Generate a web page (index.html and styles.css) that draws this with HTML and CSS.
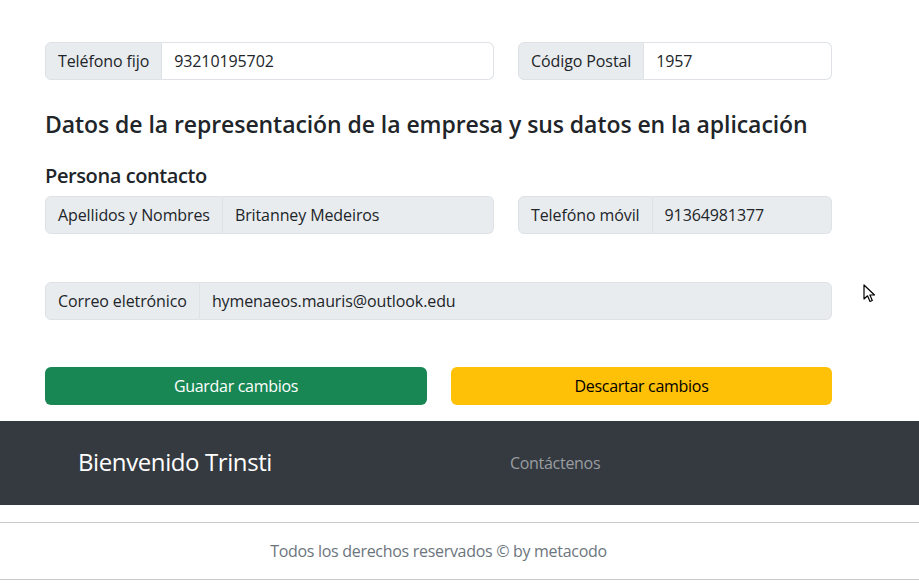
FILE: index.html
```html
<!DOCTYPE html>
<html lang="es">
<head>
<meta charset="utf-8">
<title>Datos de la empresa</title>
<link rel="stylesheet" href="styles.css">
</head>
<body>
<main class="content">
  <div class="row row-first">
    <div class="group col-wide">
      <span class="label">Teléfono fijo</span>
      <span class="field">93210195702</span>
    </div>
    <div class="group col-narrow">
      <span class="label">Código Postal</span>
      <span class="field">1957</span>
    </div>
  </div>

  <h4 class="title">Datos de la representación de la empresa y sus datos en la aplicación</h4>
  <h5 class="subtitle">Persona contacto</h5>

  <div class="row">
    <div class="group col-wide">
      <span class="label">Apellidos y Nombres</span>
      <span class="field disabled">Britanney Medeiros</span>
    </div>
    <div class="group col-narrow">
      <span class="label">Telefóno móvil</span>
      <span class="field disabled">91364981377</span>
    </div>
  </div>

  <div class="row row-mail">
    <div class="group col-full">
      <span class="label">Correo eletrónico</span>
      <span class="field disabled">hymenaeos.mauris@outlook.edu</span>
    </div>
  </div>

  <div class="buttons">
    <button class="btn btn-save">Guardar cambios</button>
    <button class="btn btn-discard">Descartar cambios</button>
  </div>
</main>

<nav class="navbar">
  <span class="brand">Bienvenido Trinsti</span>
  <a class="nav-link">Contáctenos</a>
</nav>

<footer class="footer">
  <p>Todos los derechos reservados © by metacodo</p>
</footer>

<svg class="cursor" width="14" height="20" viewBox="0 0 14 20">
  <path d="M1 1 L1 15 L4.5 11.8 L7 17.5 L9.3 16.5 L6.9 11 L11.5 11 Z" fill="#fff" stroke="#000" stroke-width="1.2" stroke-linejoin="round"/>
</svg>
</body>
</html>
```

FILE: styles.css
```css
* { box-sizing: border-box; }

html, body {
  margin: 0;
  padding: 0;
  background: #fff;
}

body {
  font-family: "Open Sans", "Liberation Sans", sans-serif;
  font-size: 16px;
  color: #212529;
  width: 919px;
  height: 586px;
  overflow: hidden;
  position: relative;
}

.content {
  width: 832px;
  padding: 42px 0 0 45px;
}

.row {
  display: flex;
  gap: 24px;
}

.row-mail { margin-top: 48px; }

.group {
  display: flex;
  height: 38px;
}

.col-wide { width: 449px; }
.col-narrow { width: 314px; }
.col-full { width: 787px; }

.label {
  display: flex;
  align-items: center;
  padding: 0 12px;
  background: #e9ecef;
  border: 1px solid #dee2e6;
  border-radius: 6px 0 0 6px;
  white-space: nowrap;
  letter-spacing: -0.1px;
}

.field {
  flex: 1;
  display: flex;
  align-items: center;
  padding: 0 12px;
  background: #fff;
  border: 1px solid #dee2e6;
  border-left: none;
  border-radius: 0 6px 6px 0;
  letter-spacing: -0.1px;
}

.field.disabled { background: #e9ecef; }

.title {
  margin: 30px 0 0;
  font-size: 23px;
  font-weight: 600;
  line-height: 28px;
  letter-spacing: -0.07px;
}

.subtitle {
  margin: 26px 0 8px;
  font-size: 20px;
  font-weight: 600;
  line-height: 24px;
  letter-spacing: -0.4px;
}

.buttons {
  display: grid;
  grid-template-columns: 382px 381px;
  gap: 24px;
  margin-top: 47px;
}

.btn {
  height: 38px;
  border: none;
  border-radius: 6px;
  font-family: inherit;
  font-size: 16px;
  letter-spacing: -0.3px;
}

.btn-save { background: #198754; color: #fff; }
.btn-discard { background: #ffc107; color: #000; }

.navbar {
  margin-top: 16px;
  height: 84px;
  background: #343a40;
  display: flex;
  align-items: center;
  padding-left: 78px;
}

.brand {
  color: #fff;
  font-size: 24px;
  width: 432px;
  letter-spacing: -0.4px;
  padding-bottom: 3px;
}

.nav-link {
  color: #9a9da0;
  font-size: 16px;
  letter-spacing: -0.3px;
}

.footer {
  margin-top: 17px;
  border-top: 1px solid #c8c8c8;
  border-bottom: 1px solid #c8c8c8;
  height: 58px;
  display: flex;
  align-items: center;
  justify-content: center;
}

.footer p {
  margin: 0;
  color: #6c757d;
  font-size: 16px;
  letter-spacing: -0.3px;
  padding-right: 42px;
}

.cursor {
  position: absolute;
  left: 863px;
  top: 284px;
}
```
